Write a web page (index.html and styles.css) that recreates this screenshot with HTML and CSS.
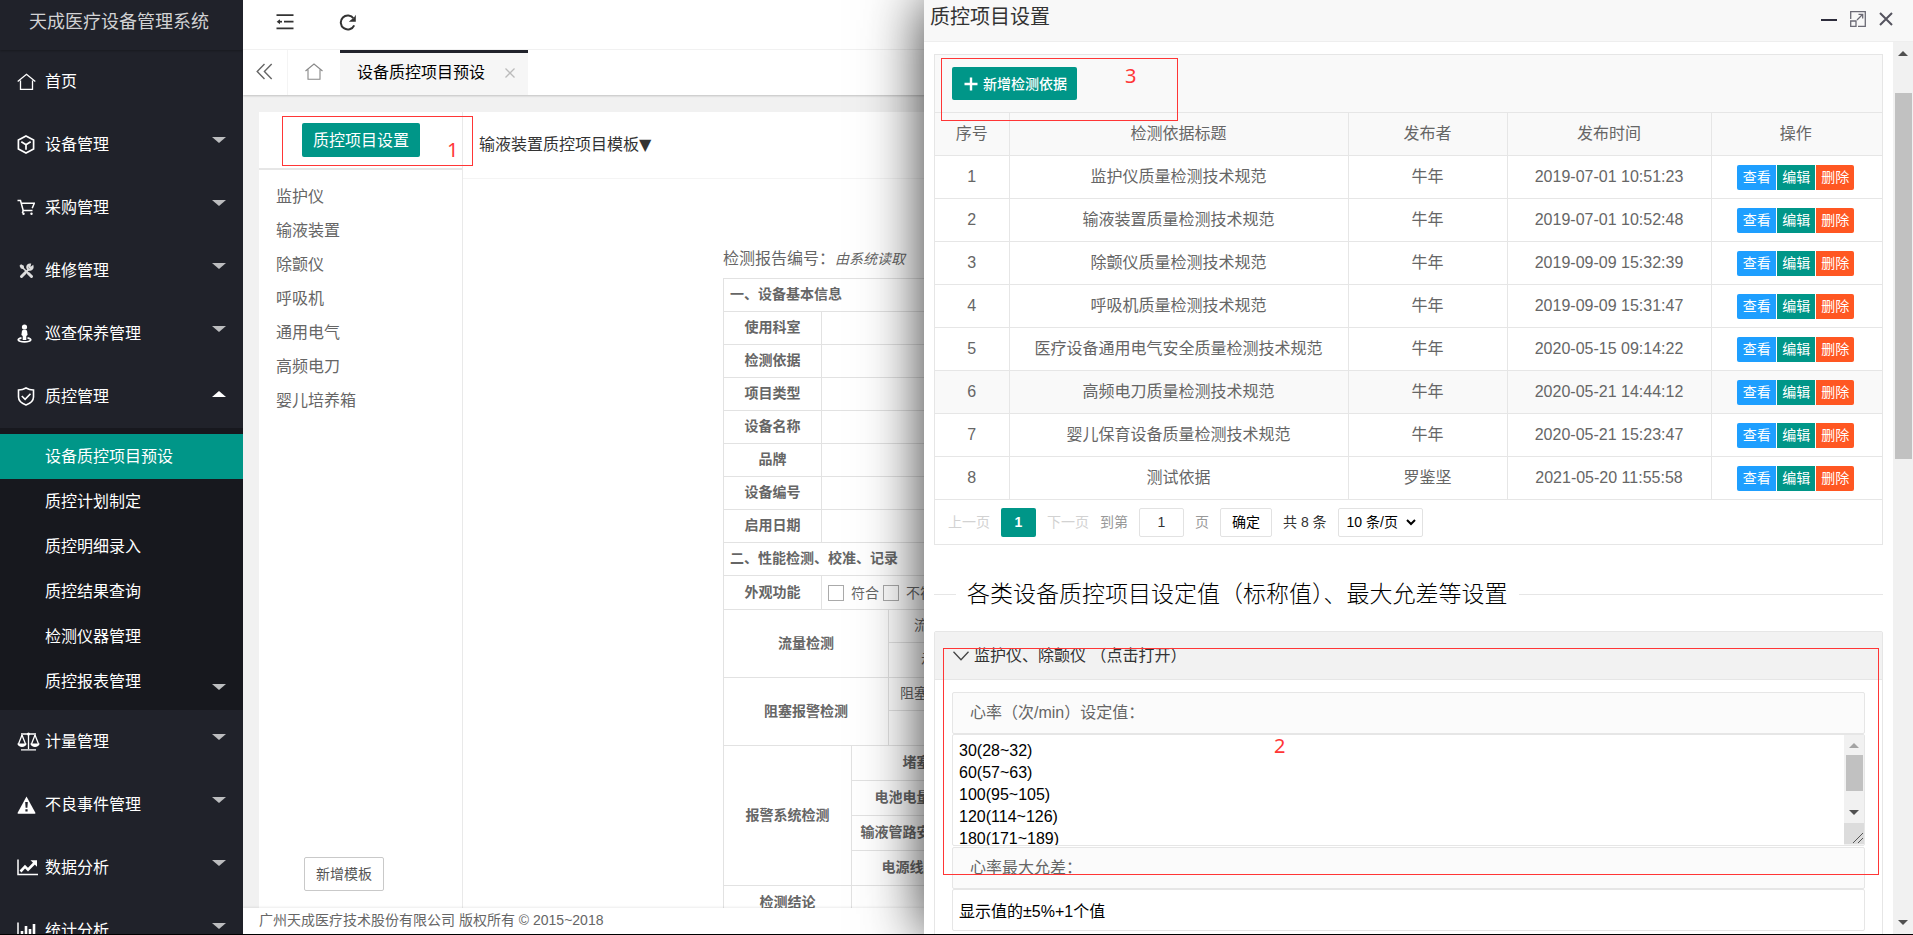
FILE: index.html
```html
<!DOCTYPE html>
<html lang="zh-CN">
<head>
<meta charset="utf-8">
<title>天成医疗设备管理系统</title>
<link rel="stylesheet" href="styles.css">
</head>
<body>
<div class="app">
  <aside class="side">
    <div class="logo">天成医疗设备管理系统</div>
    <nav class="menu">
      <a class="item" href="#"><span class="ico"><svg width="19" height="18" viewBox="0 0 19 18" fill="none" stroke="#fff" stroke-width="1.300"><path d="M.7 8.600 9.500 1.300l8.800 7.300M3.500 7.500v8.800h12V7.500"/></svg></span>首页</a>
      <a class="item" href="#"><span class="ico"><svg width="18" height="19" viewBox="0 0 18 19" fill="none" stroke="#fff" stroke-width="1.700"><path d="M9 1l7.600 4v9L9 18l-7.600-4V5zM4.300 6.800 9 9.700l4.700-2.900M9 9.500v5.300"/></svg></span>设备管理<i class="arrow"></i></a>
      <a class="item" href="#"><span class="ico"><svg width="18" height="17" viewBox="0 0 18 17" fill="none" stroke="#fff" stroke-width="1.500"><path d="M.5 1.500h3l2.700 10h9.300M4.300 4.300h13l-2.100 5"/><circle cx="6.500" cy="14.800" r="1.200" fill="#fff" stroke="none"/><circle cx="14.500" cy="14.800" r="1.200" fill="#fff" stroke="none"/><path d="M6.300 11.500l-1 2.500"/></svg></span>采购管理<i class="arrow"></i></a>
      <a class="item" href="#"><span class="ico"><svg width="18" height="18" viewBox="0 0 18 18" fill="none" stroke="#ddd"><path stroke-width="3" stroke-linecap="round" d="M11.500 11.500l3 3"/><path stroke-width="1.600" d="M4 4l7 7"/><path fill="#ddd" stroke="none" d="M2.500 3.700 4 2.300l2.800 1.500.3 2.200-1 1-2.200-.4z"/><path stroke-width="3" stroke-linecap="round" d="M4.500 14.500l4-4"/><path stroke-width="2" d="M8 11l4-4"/><path stroke-width="2" d="M15.600 4.600a2.700 2.700 0 1 1-2.600-2.200L12.400 5l1.200 1.100z"/></svg></span>维修管理<i class="arrow"></i></a>
      <a class="item" href="#"><span class="ico"><svg width="15" height="19" viewBox="0 0 15 19" fill="#fff"><circle cx="7.500" cy="3" r="2.600"/><path d="M5 6.500Q7.500 4.800 10 6.500l.6 4.500-1.300 1v4H5.700v-4l-1.300-1z"/><path fill="none" stroke="#fff" stroke-width="1.700" d="M4.500 13.800C-.5 14.800.2 17.900 7.500 17.900s8-3.100 3-4.100"/></svg></span>巡查保养管理<i class="arrow"></i></a>
      <a class="item" href="#"><span class="ico"><svg width="18" height="19" viewBox="0 0 18 19" fill="none" stroke="#fff" stroke-width="1.600"><path d="M9 1c2.500 1.500 5 2 7.500 2v7c0 4-3.500 6.500-7.500 8-4-1.500-7.500-4-7.500-8V3C4 3 6.500 2.500 9 1zM4.800 9l3.300 3.300 5.400-5.600"/></svg></span>质控管理<i class="arrow up"></i></a>
      <div class="sub">
        <a class="subitem on" href="#">设备质控项目预设</a>
        <a class="subitem" href="#">质控计划制定</a>
        <a class="subitem" href="#">质控明细录入</a>
        <a class="subitem" href="#">质控结果查询</a>
        <a class="subitem" href="#">检测仪器管理</a>
        <a class="subitem" href="#">质控报表管理<i class="arrow"></i></a>
      </div>
      <a class="item" href="#"><span class="ico"><svg width="23" height="19" viewBox="0 0 23 19" fill="none" stroke="#fff" stroke-width="1.300"><path d="M4 2h15M11.500 1v16M4 17.900h15"/><path d="M5 3 1.500 12M5 3l3.500 9M18 3l-3.500 9M18 3l3.500 9"/><path fill="#fff" stroke="none" d="M.3 11.500h9.400C9 16 1 16 .3 11.500zM13.300 11.500h9.400c-.7 4.500-8.700 4.500-9.400 0z"/><circle cx="11.500" cy="2" r="1.500" fill="#fff" stroke="none"/></svg></span>计量管理<i class="arrow"></i></a>
      <a class="item" href="#"><span class="ico"><svg width="19" height="18" viewBox="0 0 19 18"><path fill="#fff" d="M9.500.500 18.500 17q0 .8-.8.800H1.300q-.8 0-.8-.8z"/><path fill="#20222a" d="M8.200 6h2.600l-.4 5.800H8.600zM8.400 13.200h2.200v2.200H8.400z"/></svg></span>不良事件管理<i class="arrow"></i></a>
      <a class="item" href="#"><span class="ico"><svg width="21" height="17" viewBox="0 0 21 17" fill="none" stroke="#fff"><path stroke-width="1.500" d="M1 .5V15.500H21"/><path stroke-width="2.600" d="M3.500 12.500 8 7.700l3 3L17.500 4"/><path fill="#fff" stroke="none" d="M13.500 1.300H20v6.500z"/></svg></span>数据分析<i class="arrow"></i></a>
      <a class="item" href="#"><span class="ico"><svg width="21" height="17" viewBox="0 0 21 17" fill="none" stroke="#fff"><path stroke-width="1.500" d="M1 .5V15.500H21"/><path stroke-width="2.600" d="M5 14V9M9 14V4M13 14V7M17 14V2"/></svg></span>统计分析<i class="arrow"></i></a>
    </nav>
  </aside>

  <div class="main">
    <header class="top">
      <button class="tool" type="button" aria-label="收起菜单"><svg width="18" height="16" viewBox="0 0 18 16" fill="none" stroke="#333" stroke-width="1.700"><path d="M.5 1.200H17.500M8 7.700h9.500M.5 14.400H17.500"/><path d="M2 7.700h4"/><path fill="#333" stroke="none" d="M.7 7.700 4 5.200v5z"/></svg></button>
      <button class="tool" type="button" aria-label="刷新"><svg width="18" height="17" viewBox="0 0 18 17" fill="none" stroke="#333" stroke-width="2"><path d="M15.200 11.300A7 7 0 1 1 14.600 4.500"/><path fill="#333" stroke="none" d="M16.800.7v7h-7l2.600-2.200 2-1z"/></svg></button>
    </header>
    <div class="tabs">
      <button class="tabctl" type="button" aria-label="向左"><svg width="17" height="17" viewBox="0 0 17 17" fill="none" stroke="#666" stroke-width="1.400"><path d="M8.500 1 1.200 8.500 8.500 16M15.700 1 8.400 8.500l7.300 7.500"/></svg></button>
      <a class="tabhome" href="#" aria-label="主页"><svg width="18" height="17" viewBox="0 0 18 17" fill="none" stroke="#888" stroke-width="1.100"><path d="M.5 8 9 1l8.500 7M3 6.500v9.800h12V6.500"/></svg></a>
      <div class="tab">设备质控项目预设<button type="button" aria-label="关闭标签"><svg width="10" height="10" viewBox="0 0 10 10" stroke="#bbb" stroke-width="1.300"><path d="M.5.500l9 9M9.500.500l-9 9"/></svg></button></div>
    </div>
    <div class="body">
      <section class="types">
        <div class="types-head"><button class="btn-main" type="button">质控项目设置</button></div>
        <ul>
          <li>监护仪</li><li>输液装置</li><li>除颤仪</li><li>呼吸机</li><li>通用电气</li><li>高频电刀</li><li>婴儿培养箱</li>
        </ul>
        <button class="btn-plain" type="button">新增模板</button>
      </section>
      <section class="tpl">
        <div class="tpl-head">输液装置质控项目模板<span class="caret">▼</span></div>
        <div class="report">
          <p>检测报告编号：<em>由系统读取</em></p>
          <table>
            <colgroup><col class="r1"><col class="r2"><col class="r3"><col class="r4"><col></colgroup>
            <tr><th class="cap" colspan="5">一、设备基本信息</th></tr>
            <tr><th>使用科室</th><td colspan="4"></td></tr>
            <tr><th>检测依据</th><td colspan="4"></td></tr>
            <tr><th>项目类型</th><td colspan="4"></td></tr>
            <tr><th>设备名称</th><td colspan="4"></td></tr>
            <tr><th>品牌</th><td colspan="4"></td></tr>
            <tr><th>设备编号</th><td colspan="4"></td></tr>
            <tr><th>启用日期</th><td colspan="4"></td></tr>
            <tr><th class="cap" colspan="5">二、性能检测、校准、记录</th></tr>
            <tr class="h34"><th>外观功能</th><td colspan="4"><div class="checks"><label><input type="checkbox">符合</label><label><input type="checkbox">不符合</label></div></td></tr>
            <tr><th colspan="3" rowspan="2">流量检测</th><td class="mid">流量设定值</td><td></td></tr>
            <tr class="h35"><td class="mid">示值误差</td><td></td></tr>
            <tr><th colspan="3" rowspan="2">阻塞报警检测</th><td class="mid">阻塞报警设定值</td><td></td></tr>
            <tr class="h35"><td class="mid"></td><td></td></tr>
            <tr class="h35"><th colspan="2" rowspan="4">报警系统检测</th><th colspan="2">堵塞报警</th><td></td></tr>
            <tr class="h35"><th colspan="2">电池电量不足报警</th><td></td></tr>
            <tr class="h35"><th colspan="2">输液管路安装不妥报警</th><td></td></tr>
            <tr class="h35"><th colspan="2">电源线脱开报警</th><td></td></tr>
            <tr class="h35"><th colspan="2">检测结论</th><td colspan="3"></td></tr>
          </table>
        </div>
      </section>
    </div>
    <footer class="foot">广州天成医疗技术股份有限公司 版权所有 © 2015~2018</footer>
  </div>

  <div class="dialog" role="dialog" aria-labelledby="dlg-title">
    <div class="dlg-head">
      <h2 id="dlg-title">质控项目设置</h2>
      <button type="button" aria-label="最小化"><svg width="16" height="16" viewBox="0 0 16 16"><path fill="#2e2d3c" d="M0 8h16v2H0z"/></svg></button>
      <button type="button" aria-label="还原"><svg width="16" height="16" viewBox="0 0 16 16" fill="none" stroke="#6b6a75" stroke-width="1.300"><path d="M.7 8V.7h14.600v14.600H8M.7 10h5.300v5.300H.7zM7 9l5.500-5.500M8.500 3.300h4.200v4.200"/></svg></button>
      <button type="button" aria-label="关闭"><svg width="14" height="14" viewBox="0 0 14 14" stroke="#55545f" stroke-width="2"><path d="M1 1l12 12M13 1 1 13"/></svg></button>
    </div>
    <div class="dlg-body">
      <div class="dlg-content">
        <div class="grid">
          <div class="grid-tool"><button class="btn-add" type="button"><svg width="14" height="14" viewBox="0 0 14 14" stroke="#fff" stroke-width="2.400"><path d="M7 .5v13M.5 7h13"/></svg>新增检测依据</button></div>
          <table>
            <colgroup><col class="g1"><col class="g2"><col class="g3"><col class="g4"><col></colgroup>
            <thead><tr><th>序号</th><th>检测依据标题</th><th>发布者</th><th>发布时间</th><th>操作</th></tr></thead>
            <tbody>
              <tr><td>1</td><td>监护仪质量检测技术规范</td><td>牛年</td><td>2019-07-01 10:51:23</td><td><div class="ops"><button type="button" class="view">查看</button><button type="button" class="edit">编辑</button><button type="button" class="del">删除</button></div></td></tr>
              <tr><td>2</td><td>输液装置质量检测技术规范</td><td>牛年</td><td>2019-07-01 10:52:48</td><td><div class="ops"><button type="button" class="view">查看</button><button type="button" class="edit">编辑</button><button type="button" class="del">删除</button></div></td></tr>
              <tr><td>3</td><td>除颤仪质量检测技术规范</td><td>牛年</td><td>2019-09-09 15:32:39</td><td><div class="ops"><button type="button" class="view">查看</button><button type="button" class="edit">编辑</button><button type="button" class="del">删除</button></div></td></tr>
              <tr><td>4</td><td>呼吸机质量检测技术规范</td><td>牛年</td><td>2019-09-09 15:31:47</td><td><div class="ops"><button type="button" class="view">查看</button><button type="button" class="edit">编辑</button><button type="button" class="del">删除</button></div></td></tr>
              <tr><td>5</td><td>医疗设备通用电气安全质量检测技术规范</td><td>牛年</td><td>2020-05-15 09:14:22</td><td><div class="ops"><button type="button" class="view">查看</button><button type="button" class="edit">编辑</button><button type="button" class="del">删除</button></div></td></tr>
              <tr class="hot"><td>6</td><td>高频电刀质量检测技术规范</td><td>牛年</td><td>2020-05-21 14:44:12</td><td><div class="ops"><button type="button" class="view">查看</button><button type="button" class="edit">编辑</button><button type="button" class="del">删除</button></div></td></tr>
              <tr><td>7</td><td>婴儿保育设备质量检测技术规范</td><td>牛年</td><td>2020-05-21 15:23:47</td><td><div class="ops"><button type="button" class="view">查看</button><button type="button" class="edit">编辑</button><button type="button" class="del">删除</button></div></td></tr>
              <tr><td>8</td><td>测试依据</td><td>罗鉴坚</td><td>2021-05-20 11:55:58</td><td><div class="ops"><button type="button" class="view">查看</button><button type="button" class="edit">编辑</button><button type="button" class="del">删除</button></div></td></tr>
            </tbody>
          </table>
          <div class="pager">
            <span class="off">上一页</span><span class="cur">1</span><span class="off">下一页</span>
            <label for="pg">到第</label><input id="pg" type="text" value="1"><span class="dim">页</span>
            <button type="button">确定</button><span>共 8 条</span>
            <div class="sel"><select aria-label="每页条数"><option>10 条/页</option></select><svg width="10" height="7" viewBox="0 0 10 7" fill="none" stroke="#000" stroke-width="2"><path d="M1 1l4 4 4-4"/></svg></div>
          </div>
        </div>

        <fieldset class="title"><legend>各类设备质控项目设定值（标称值）、最大允差等设置</legend></fieldset>

        <div class="fold">
          <div class="fold-head"><svg width="16" height="10" viewBox="0 0 16 10" fill="none" stroke="#444" stroke-width="1.300"><path d="M.5.800 8 8.700 15.500.800"/></svg>监护仪、除颤仪 （点击打开）</div>
          <div class="fold-body">
            <label class="lab" for="hr">心率（次/min）设定值：</label>
            <div class="area">
              <textarea id="hr">30(28~32)
60(57~63)
100(95~105)
120(114~126)
180(171~189)</textarea>
              <div class="abar"><i class="tri-up"></i><i class="athumb"></i><i class="tri-down"></i><svg class="grip" width="20" height="21" viewBox="0 0 20 21" stroke="#555" stroke-width="1"><path d="M9 20 19 10M14 20l5-5"/></svg></div>
            </div>
            <label class="lab second" for="hrmax">心率最大允差：</label>
            <input class="txt" id="hrmax" type="text" value="显示值的±5%+1个值">
          </div>
        </div>
      </div>
      <div class="sbar"><i class="tri-up"></i><i class="sthumb"></i><i class="tri-down"></i></div>
    </div>
  </div>

  <div class="note n1">1</div>
  <div class="note n2">2</div>
  <div class="note n3">3</div>
</div>
</body>
</html>
```

FILE: styles.css
```css
* { box-sizing: border-box; }
body {
  margin: 0;
  font: 16px/24px "Liberation Sans", "Noto Sans CJK SC", sans-serif;
  color: #666;
  background: #fff;
}
button, input, select, textarea { font: inherit; margin: 0; }
button { border: 0; padding: 0; background: none; cursor: pointer; }
a { color: inherit; text-decoration: none; }
svg { display: block; flex: none; }

.app {
  position: relative;
  display: flex;
  height: 100vh;
  overflow: hidden;
  border-bottom: 1px solid #000;
}

/* side menu */
.side { flex: none; width: 243px; background: #20222a; color: #fff; overflow: hidden; }
.logo {
  height: 50px;
  line-height: 44px;
  text-align: center;
  font-size: 18px;
  color: #d2d2d4;
  padding-right: 5px;
  box-shadow: 0 1px 2px rgba(0, 0, 0, .25);
}
.item, .subitem { display: flex; align-items: center; padding: 0 17px; }
.item { height: 63px; }
.ico { width: 28px; flex: none; }
.arrow {
  margin: 0 0 10px auto;
  border: 6px solid transparent;
  border-width: 6px 7px 0;
  border-top-color: #bcbdbf;
}
.arrow.up { border-width: 0 7px 6px; border-bottom-color: #fff; margin-bottom: 6px; }
.sub { background: #17181e; padding: 6px 0; }
.subitem { height: 45px; padding-left: 45px; }
.subitem .arrow { margin: 10px 0 0 auto; }
.subitem.on { background: #009688; }

/* main area */
.main { flex: 1; min-width: 0; display: flex; flex-direction: column; background: #f1f1f1; }
.top {
  height: 50px;
  flex: none;
  display: flex;
  gap: 45px;
  padding: 0 33px 5px;
  align-items: center;
  background: #fff;
  border-bottom: 1px solid #f4f4f4;
}
.tabs {
  height: 45px;
  flex: none;
  display: flex;
  background: #fff;
  box-shadow: 0 1px 2px rgba(0, 0, 0, .2);
}
.tabctl { width: 45px; padding: 0 0 3px 13px; border-right: 1px solid #f4f4f4; }
.tabhome { width: 52px; padding: 13px 17px; }
.tab {
  display: flex;
  align-items: center;
  gap: 20px;
  padding: 0 13px 2px 17px;
  border-top: 3px solid #20222a;
  background: #f6f6f6;
  color: #000;
}
.body { flex: 1; min-height: 0; display: flex; margin: 17px 0 0 16px; background: #fff; }
.types { flex: none; width: 204px; border-right: 1px solid #e9e9e9; display: flex; flex-direction: column; }
.types-head { height: 58px; padding: 11px 43px; border-bottom: 2px solid #e6e6e6; }
.btn-main { height: 34px; padding: 2px 11px 0; border-radius: 2px; background: #009688; color: #fff; white-space: nowrap; }
.types ul { list-style: none; margin: 0; padding: 10px 17px; line-height: 34px; flex: 1; }
.btn-plain {
  align-self: flex-start;
  height: 34px;
  margin: 0 0 17px 45px;
  padding: 0 11px;
  border: 1px solid #c9c9c9;
  border-radius: 2px;
  font-size: 14px;
  color: #555;
}
.tpl { flex: 1; min-width: 0; overflow: hidden; }
.tpl-head { height: 67px; line-height: 66px; padding-left: 16px; border-bottom: 1px solid #f4f4f4; color: #333; }
.caret { font-family: "DejaVu Sans", sans-serif; }
.report { width: 930px; margin: 0 auto; padding-top: 64px; }
.report p { margin: 0; height: 35px; line-height: 31px; }
.report em { font-size: 14px; }
.report table { width: 100%; table-layout: fixed; border-collapse: collapse; font-size: 14px; line-height: 20px; }
.report th, .report td { border: 1px solid #e2e2e2; padding: 0 6px 2px; }
.report tr { height: 33px; }
.report .h34 { height: 34px; }
.report .h35 { height: 35px; }
.report .cap { text-align: left; }
.report .mid { text-align: center; }
.r1 { width: 98px; }
.r2 { width: 30px; }
.r3 { width: 37px; }
.r4 { width: 121px; }
.checks { display: flex; gap: 4px; padding-top: 2px; }
.checks label { display: flex; align-items: center; gap: 7px; }
.checks input { appearance: none; width: 16px; height: 16px; border: 1px solid #aaa; background: #fff; }
.foot {
  flex: none;
  height: 26px;
  line-height: 25px;
  padding-left: 16px;
  font-size: 14px;
  background: #fff;
  box-shadow: 0 -1px 2px rgba(0, 0, 0, .08);
  position: relative;
}

/* settings window */
.dialog {
  position: absolute;
  left: 924px;
  right: 0;
  top: 0;
  bottom: 0;
  display: flex;
  flex-direction: column;
  background: #fff;
  box-shadow: 0 0 56px rgba(0, 0, 0, .8);
}
.dlg-head {
  flex: none;
  height: 42px;
  display: flex;
  align-items: center;
  gap: 13px;
  padding: 0 20px 3px 6px;
  background: #f8f8f8;
  border-bottom: 1px solid #eee;
}
.dlg-head h2 { margin: 0 auto 4px 0; font-size: 20px; line-height: 28px; font-weight: 400; color: #333; }
.dlg-body { flex: 1; min-height: 0; display: flex; }
.dlg-content { flex: 1; min-width: 0; padding: 12px 10px 0; overflow: hidden; }

.grid { border: 1px solid #e6e6e6; }
.grid-tool { height: 57px; padding: 12px 17px; background: #f9f9f9; }
.btn-add {
  display: flex;
  align-items: center;
  gap: 5px;
  height: 33px;
  padding: 0 10px 0 12px;
  border-radius: 2px;
  background: #009688;
  color: #fff;
  font-size: 14px;
  font-weight: 500;
}
.grid table { width: 100%; table-layout: fixed; border-collapse: collapse; }
.grid tr { height: 43px; }
.grid th, .grid td {
  padding: 0;
  font-weight: 400;
  text-align: center;
  border: 1px solid #e6e6e6;
  border-width: 1px 0 1px 1px;
}
.grid th:first-child, .grid td:first-child { border-left: 0; }
.grid th:last-child, .grid td:last-child { padding-right: 2px; }
.grid th { background: #f9f9f9; }
.hot { background: #f9f9f9; }
.g1 { width: 74px; }
.g2 { width: 339px; }
.g3 { width: 159px; }
.g4 { width: 204px; }
.ops { display: flex; justify-content: center; gap: 1px; }
.ops button { width: 38px; height: 25px; font-size: 14px; line-height: 24px; color: #fff; }
.ops .view { width: 39px; background: #1e9fff; border-radius: 2px 0 0 2px; }
.ops .edit { background: #009688; }
.ops .del { background: #ff5722; border-radius: 0 2px 2px 0; }

.pager { display: flex; align-items: center; gap: 11px; height: 44px; padding: 0 13px; font-size: 14px; color: #333; white-space: nowrap; }
.pager .off { color: #d2d2d2; }
.pager .cur { width: 35px; height: 29px; line-height: 29px; border-radius: 2px; background: #009688; color: #fff; font-weight: 700; text-align: center; }
.pager label, .pager .dim { color: #999; }
.pager input { width: 45px; height: 29px; border: 1px solid #e2e2e2; border-radius: 2px; text-align: center; color: #333; }
.pager button { width: 52px; height: 29px; border: 1px solid #e2e2e2; border-radius: 2px; color: #000; }
.sel { display: grid; align-items: center; }
.sel select, .sel svg { grid-area: 1 / 1; }
.sel select { appearance: none; width: 85px; height: 29px; padding: 0 8px; border: 1px solid #e2e2e2; border-radius: 2px; background: #fff; color: #000; }
.sel svg { justify-self: end; margin-right: 7px; }

.title { margin: 34px 0 22px; padding: 0; border: 0; border-top: 1px solid #e6e6e6; }
.title legend { margin-left: 22px; padding: 0 11px; font-size: 23px; line-height: 30px; font-weight: 300; color: #000; }

.fold { border: 1px solid #e6e6e6; border-radius: 2px; }
.fold-head {
  display: flex;
  align-items: center;
  gap: 5px;
  height: 48px;
  padding-left: 18px;
  background: #f2f2f2;
  border-bottom: 1px solid #e6e6e6;
  color: #333;
}
.fold-body { padding: 12px 17px 20px; }
.lab { display: block; height: 42px; line-height: 40px; padding-left: 17px; border: 1px solid #e6e6e6; border-radius: 2px; background: #fbfbfb; }
.area { display: flex; height: 112px; border: 1px solid #e6e6e6; border-radius: 2px; }
.area textarea { flex: 1; min-width: 0; border: 0; padding: 5px 6px 0; line-height: 22px; color: #000; background: none; resize: none; overflow: hidden; outline: 0; }
.abar, .sbar { flex: none; width: 20px; display: flex; flex-direction: column; align-items: center; background: #f1f1f1; }
.tri-up, .tri-down { border: 5px solid transparent; }
.tri-up { border-top-width: 0; border-bottom-color: #505050; }
.tri-down { border-bottom-width: 0; border-top-color: #505050; }
.abar .tri-up { border-bottom-color: #a3a3a3; margin: 8px 0 7px; }
.athumb { width: 17px; height: 36px; background: #c1c1c1; }
.abar .tri-down { margin: 19px 0 8px; }
.grip { background: #dcdcdc; }
.lab.second { margin-top: 1px; }
.txt { display: block; width: 100%; height: 42px; padding: 0 6px; border: 1px solid #e6e6e6; border-radius: 2px; color: #000; }
.sbar .tri-up { margin: 9px 0 37px; }
.sthumb { width: 17px; height: 366px; background: #c1c1c1; }
.sbar .tri-down { margin: auto 0 9px; }

/* numbered callouts */
.note {
  position: absolute;
  border: 1px solid #ff3636;
  color: #ff3636;
  font: 20px/24px "Noto Sans", sans-serif;
  pointer-events: none;
}
.n1 { left: 282px; top: 116px; width: 191px; height: 50px; padding: 21px 0 0 164px; }
.n2 { left: 943px; right: 34px; top: 648px; height: 227px; padding: 85px 0 0 330px; }
.n3 { left: 941px; top: 58px; width: 237px; height: 63px; padding: 5px 0 0 183px; }
```
